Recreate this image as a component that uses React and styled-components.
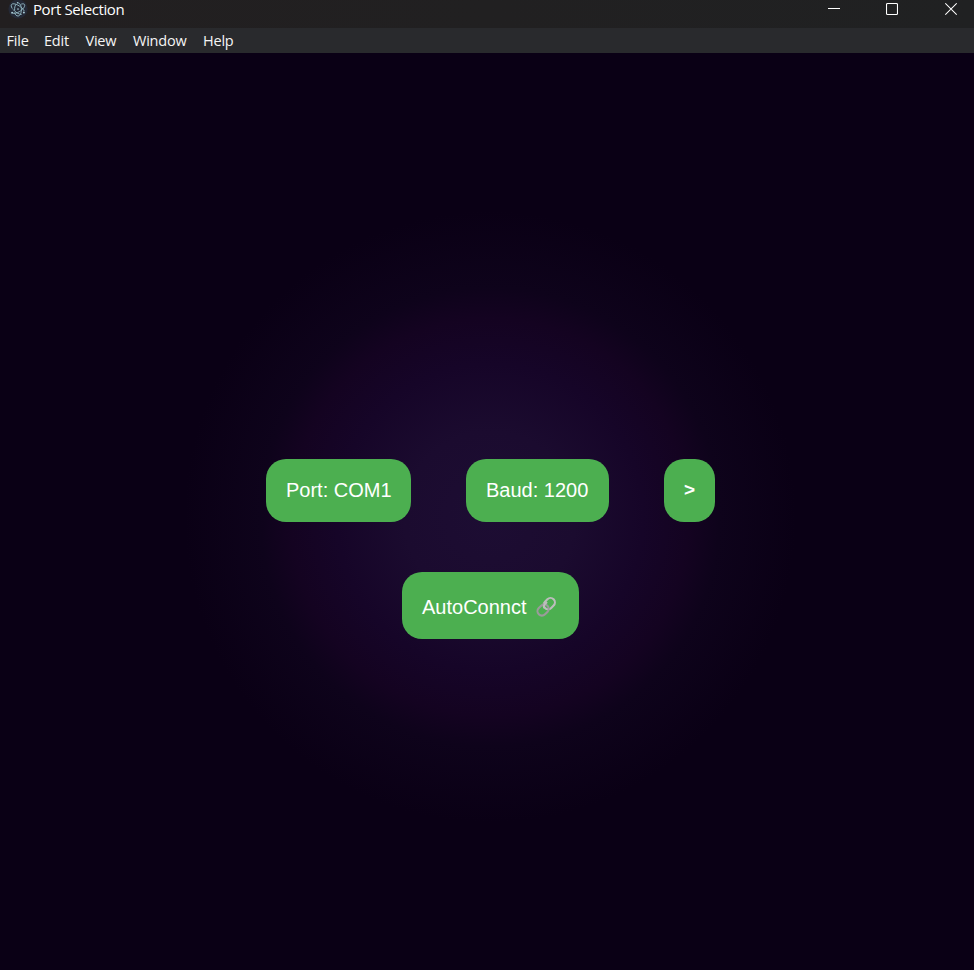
import React from "react";
import styled, { createGlobalStyle } from "styled-components";

const GlobalStyle = createGlobalStyle`
  *, *::before, *::after { box-sizing: border-box; }
  html, body { margin: 0; height: 100%; background: #0a0015; }
  #root { height: 100%; }
`;

const Window = styled.div`
  display: flex;
  flex-direction: column;
  height: 100vh;
  overflow: hidden;
  color: #fff;
`;

const TitleBar = styled.header`
  display: flex;
  align-items: flex-start;
  flex: 0 0 28px;
  padding-left: 8px;
  background: linear-gradient(90deg, #221f20, #202122);
`;

const Title = styled.span`
  flex: 1;
  margin-left: 5px;
  font: 15px/18px "Open Sans", "Noto Sans", sans-serif;
  letter-spacing: ${(p) => p.$tracking}px;
`;

const WindowControls = styled.div`
  display: flex;
`;

const ControlButton = styled.button`
  display: flex;
  width: ${(p) => p.$width}px;
  height: 28px;
  padding: 0 0 0 23px;
  border: 0;
  background: none;
  color: #fff;
`;

const MenuBar = styled.nav`
  display: flex;
  flex: 0 0 25px;
  padding-left: 0.5px;
  background: #292a2d;
`;

const MenuItem = styled.span`
  flex: 0 0 ${(p) => p.$width}px;
  padding-left: 6px;
  white-space: nowrap;
  font: 14.5px/25px "Open Sans", "Noto Sans", sans-serif;
  letter-spacing: ${(p) => p.$tracking}px;
  color: #f5f5f5;
`;

const Stage = styled.main`
  display: flex;
  flex: 1;
  flex-direction: column;
  align-items: center;
  gap: 50px;
  padding: 406px 0 0 7px;
  background: radial-gradient(circle 306px at 490px 464px, #1d0d33 0%, #1b0b2f 28%, #160528 50%, #140321 65%, #0e031b 75%, #0a0015 100%);
`;

const ButtonRow = styled.div`
  display: flex;
  gap: 55px;
`;

const ActionButton = styled.button`
  display: flex;
  align-items: center;
  justify-content: flex-start;
  gap: 8px;
  width: ${(p) => p.$width}px;
  height: ${(p) => p.$height || 63}px;
  padding: ${(p) => p.$drop || 0}px 0 ${(p) => p.$lift || 0}px 20px;
  border: 0;
  border-radius: 20px;
  background: #4caf50;
  color: #fff;
  font: 400 20px/23px "Liberation Sans", Arial, sans-serif;
  white-space: nowrap;
`;

const NextButton = styled(ActionButton)`
  justify-content: center;
  padding-left: 0;
  font-size: 19px;
  font-weight: 700;
`;

const AppIcon = () => (
  <svg width="20" height="19" viewBox="0 0 20 19" fill="none">
    <circle cx="10" cy="9" r="9.6" fill="#242936" />
    <g stroke="#92b7c2" strokeWidth="0.95" strokeLinecap="round">
      <path d="M4.1 8.3C2.9 6.4 2.8 4.6 4.2 4C6.2 3.1 10.6 5 13.8 7.9C14.9 8.9 15.6 9.8 16 10.6" />
      <path d="M6.6 12.9C7.3 15 8.5 16 10 16C12.2 16 13.6 12.8 13.4 8.6C13.3 5.9 12.3 3.5 10.6 3" />
      <path d="M13.6 4C15 3.5 16.3 3.8 16.6 4.8C17.2 6.7 14.6 9.8 11.3 11.7C9 13 6.7 13.6 5.4 13.3" />
      <path d="M8.3 4.2C7 5.3 6.4 7.4 6.6 10" />
      <path d="M5.4 9.8C7.4 12.3 10.6 14.2 13.2 14.5" />
    </g>
    <g fill="#a9cbd5">
      <circle cx="10" cy="9.1" r="0.8" />
      <circle cx="4.1" cy="12.8" r="1" />
      <circle cx="15.9" cy="12.6" r="1" />
      <circle cx="9.6" cy="2.7" r="0.8" />
    </g>
  </svg>
);

const MinimizeIcon = () => (
  <svg width="12" height="18" viewBox="0 0 12 18">
    <path d="M0 8.5H12" stroke="currentColor" />
  </svg>
);

const MaximizeIcon = () => (
  <svg width="12" height="18" viewBox="0 0 12 18" fill="none">
    <rect x="0.5" y="3.5" width="11" height="11" rx="1" stroke="currentColor" strokeWidth="1.1" />
  </svg>
);

const CloseIcon = () => (
  <svg width="12" height="18" viewBox="0 0 12 18" fill="none">
    <path d="M0.3 3.3L11.7 14.7M11.7 3.3L0.3 14.7" stroke="currentColor" strokeWidth="1.1" />
  </svg>
);

const LinkIcon = () => (
  <svg width="22" height="22" viewBox="0 0 22 22" fill="none" strokeWidth="2.1">
    <rect x="8.2" y="3.2" width="12.2" height="8.8" rx="4.4" transform="rotate(-45 14.3 7.6)" stroke="#bdbdbd" />
    <rect x="2" y="9.6" width="12.2" height="8.8" rx="4.4" transform="rotate(-45 8.1 14)" stroke="#9b9b9b" />
    <path d="M9.2 12.1C8.5 10.4 8.7 9.3 9.7 8.2L12 5.9" stroke="#bdbdbd" />
  </svg>
);

const menus = [
  { label: "File", width: 37.5 },
  { label: "Edit", width: 41.5 },
  { label: "View", width: 47.5 },
  { label: "Window", width: 70 },
  { label: "Help", width: 50 },
];

export default function App() {
  return (
    <>
      <GlobalStyle />
      <Window>
        <TitleBar>
          <AppIcon />
          <Title $tracking={-0.4}>Port Selection</Title>
          <WindowControls>
            <ControlButton $width={58} aria-label="Minimize"><MinimizeIcon /></ControlButton>
            <ControlButton $width={59} aria-label="Maximize"><MaximizeIcon /></ControlButton>
            <ControlButton $width={52} aria-label="Close"><CloseIcon /></ControlButton>
          </WindowControls>
        </TitleBar>
        <MenuBar>
          {menus.map((m) => (
            <MenuItem key={m.label} $width={m.width} $tracking={-0.22}>{m.label}</MenuItem>
          ))}
        </MenuBar>
        <Stage>
          <ButtonRow>
            <ActionButton $width={145} $lift={1}>Port: COM1</ActionButton>
            <ActionButton $width={143} $lift={1}>Baud: 1200</ActionButton>
            <NextButton $width={51} $lift={2}>&gt;</NextButton>
          </ButtonRow>
          <ActionButton $width={177} $height={67} $drop={3}>
            AutoConnct
            <LinkIcon />
          </ActionButton>
        </Stage>
      </Window>
    </>
  );
}
